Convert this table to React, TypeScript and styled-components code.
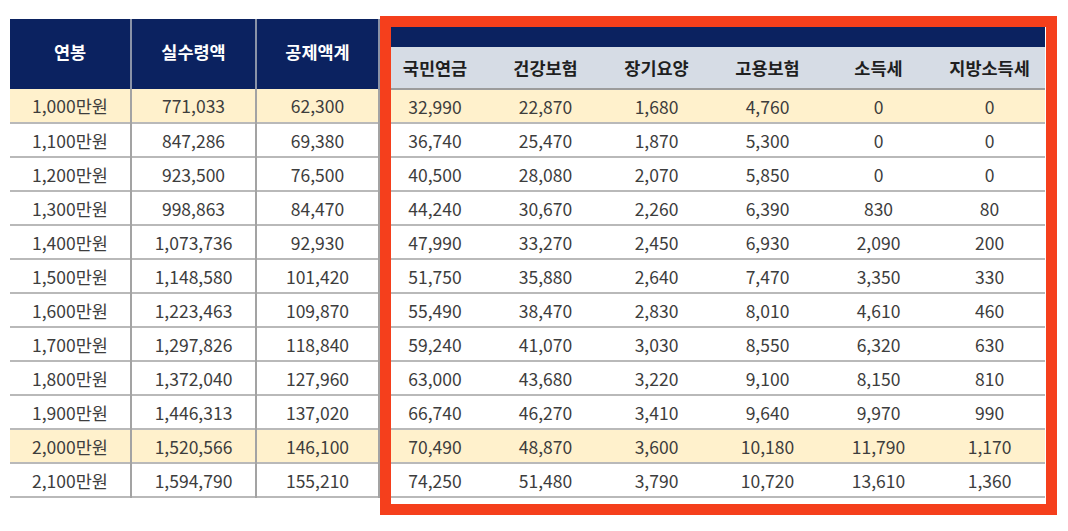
import styled, { createGlobalStyle } from "styled-components";

const GlobalStyle = createGlobalStyle`
  html, body {
    margin: 0;
    padding: 0;
    background: #ffffff;
  }
  body {
    font-family: "Noto Sans CJK KR", "Noto Sans", sans-serif;
  }
`;

const PageWrapper = styled.div`
  box-sizing: border-box;
  min-height: 531px;
  padding: 19px 0 0 10px;
`;

const TableFrame = styled.div`
  position: relative;
  width: 1035px;
`;

const StyledTable = styled.table`
  width: 1035px;
  border-collapse: collapse;
  table-layout: fixed;
  font-size: 17.5px;
  color: #3d3d3d;
`;

const NavyHead = styled.th<{ $divider?: boolean }>`
  background: #0b2260;
  color: #ffffff;
  font-weight: 700;
  padding: 0 0 6px 0;
  vertical-align: middle;
  border-right: ${(p) => (p.$divider ? "2px solid #8a93a8" : "none")};
`;

const BandHead = styled.th`
  background: #0b2260;
  height: 28px;
  padding: 0;
`;

const SubHead = styled.th`
  background: #d6dce5;
  color: #1f1f1f;
  font-weight: 700;
  height: 41px;
  padding: 0;
  border-bottom: 2px solid #9c9c9c;
`;

const Row = styled.tr<{ $highlight?: boolean }>`
  background: ${(p) => (p.$highlight ? "#fff1cc" : "#ffffff")};
  border-bottom: 2px solid #b9b9b9;
`;

const Cell = styled.td<{ $divider?: boolean }>`
  height: 32px;
  padding: 0;
  text-align: center;
  border-right: ${(p) => (p.$divider ? "2px solid #a3a3a3" : "none")};
`;

// red marker drawn over the deduction columns
const Highlight = styled.div`
  position: absolute;
  left: 370px;
  top: -3px;
  width: 677px;
  height: 499px;
  box-sizing: border-box;
  border: 11px solid #f53f1c;
  pointer-events: none;
`;

const leftCols = ["연봉", "실수령액", "공제액계"];
const rightCols = ["국민연금", "건강보험", "장기요양", "고용보험", "소득세", "지방소득세"];

const rows: string[][] = [
  ["1,000만원", "771,033", "62,300", "32,990", "22,870", "1,680", "4,760", "0", "0"],
  ["1,100만원", "847,286", "69,380", "36,740", "25,470", "1,870", "5,300", "0", "0"],
  ["1,200만원", "923,500", "76,500", "40,500", "28,080", "2,070", "5,850", "0", "0"],
  ["1,300만원", "998,863", "84,470", "44,240", "30,670", "2,260", "6,390", "830", "80"],
  ["1,400만원", "1,073,736", "92,930", "47,990", "33,270", "2,450", "6,930", "2,090", "200"],
  ["1,500만원", "1,148,580", "101,420", "51,750", "35,880", "2,640", "7,470", "3,350", "330"],
  ["1,600만원", "1,223,463", "109,870", "55,490", "38,470", "2,830", "8,010", "4,610", "460"],
  ["1,700만원", "1,297,826", "118,840", "59,240", "41,070", "3,030", "8,550", "6,320", "630"],
  ["1,800만원", "1,372,040", "127,960", "63,000", "43,680", "3,220", "9,100", "8,150", "810"],
  ["1,900만원", "1,446,313", "137,020", "66,740", "46,270", "3,410", "9,640", "9,970", "990"],
  ["2,000만원", "1,520,566", "146,100", "70,490", "48,870", "3,600", "10,180", "11,790", "1,170"],
  ["2,100만원", "1,594,790", "155,210", "74,250", "51,480", "3,790", "10,720", "13,610", "1,360"],
];

const highlighted = ["1,000만원", "2,000만원"];

const App = () => {
  return (
    <>
      <GlobalStyle />
      <PageWrapper>
        <TableFrame>
          <StyledTable>
            <colgroup>
              <col style={{ width: 121 }} />
              <col style={{ width: 125 }} />
              <col style={{ width: 123 }} />
              {rightCols.map((c) => (
                <col key={c} style={{ width: 111 }} />
              ))}
            </colgroup>
            <thead>
              <tr>
                {leftCols.map((c) => (
                  <NavyHead key={c} rowSpan={2} $divider>
                    {c}
                  </NavyHead>
                ))}
                <BandHead colSpan={6} />
              </tr>
              <tr>
                {rightCols.map((c) => (
                  <SubHead key={c}>{c}</SubHead>
                ))}
              </tr>
            </thead>
            <tbody>
              {rows.map((r) => (
                <Row key={r[0]} $highlight={highlighted.includes(r[0])}>
                  {r.map((v, i) => (
                    <Cell key={i} $divider={i < 3}>
                      {v}
                    </Cell>
                  ))}
                </Row>
              ))}
            </tbody>
          </StyledTable>
          <Highlight />
        </TableFrame>
      </PageWrapper>
    </>
  );
};

export default App;
